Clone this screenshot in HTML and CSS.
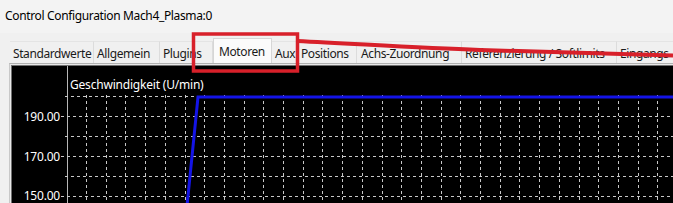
FILE: index.html
```html
<!DOCTYPE html>
<html>
<head>
<meta charset="utf-8">
<link rel="stylesheet" href="styles.css">
</head>
<body>
<div class="window">
  <div class="titlebar">Control Configuration Mach4_Plasma:0</div>
  <div class="tabs">
    <div class="tab t1">Standardwerte</div>
    <div class="tab t2">Allgemein</div>
    <div class="tab t3">Plugins</div>
    <div class="tab t4 active">Motoren</div>
    <div class="tab t5">Aux</div>
    <div class="tab t6">Positions</div>
    <div class="tab t7">Achs-Zuordnung</div>
    <div class="tab t8">Referenzierung / Softlimits</div>
    <div class="tab t9">Eingangs</div>
  </div>
  <div class="panel">
    <div class="chart">
      <svg class="chart-svg" width="661" height="137" viewBox="0 0 661 137">
        <line x1="55.5" y1="0" x2="55.5" y2="137" stroke="#b8b8b8" stroke-width="1"/>
        <g stroke="#c8c8c8" stroke-width="1" stroke-dasharray="3 3">
          <line x1="53" y1="30.5" x2="661" y2="30.5"/>
          <line x1="49" y1="50.5" x2="661" y2="50.5"/>
          <line x1="53" y1="70.5" x2="661" y2="70.5"/>
          <line x1="49" y1="90.5" x2="661" y2="90.5"/>
          <line x1="53" y1="110.5" x2="661" y2="110.5"/>
          <line x1="49" y1="130.5" x2="661" y2="130.5"/>
        </g>
        <g id="vgrid" stroke="#c8c8c8" stroke-width="1" stroke-dasharray="3 3" stroke-dashoffset="-1"></g>
        <g fill="#ffffff" font-family="'Noto Sans', 'Open Sans', sans-serif" font-size="12" letter-spacing="-0.2">
          <text x="58" y="23">Geschwindigkeit (U/min)</text>
          <text x="48" y="55" text-anchor="end">190.00</text>
          <text x="48" y="95" text-anchor="end">170.00</text>
          <text x="48" y="134" text-anchor="end">150.00</text>
        </g>
        <polyline points="175,140 186,31 661,31" fill="none" stroke="#1414e6" stroke-width="3" stroke-linejoin="miter"/>
      </svg>
    </div>
  </div>
  <svg class="annot" width="673" height="203" viewBox="0 0 673 203">
    <rect x="193.5" y="34" width="104" height="37" fill="none" stroke="#d8202a" stroke-width="3.5"/>
    <path d="M297,41 C360,44 420,48 480,50 S600,53 673,55.5" fill="none" stroke="#d8202a" stroke-width="4"/>
  </svg>
</div>
<script>
  var g = document.getElementById('vgrid');
  var s = '';
  for (var k = 0; k < 31; k++) {
    var x = Math.round(74 + 19.7 * k) + 0.5;
    if (x > 661) break;
    s += '<line x1="' + x + '" y1="28" x2="' + x + '" y2="137"/>';
  }
  g.innerHTML = s;
</script>
</body>
</html>
```

FILE: styles.css
```css
html, body {
  margin: 0;
  padding: 0;
}
body {
  width: 673px;
  height: 203px;
  overflow: hidden;
  background: #f0f0f0;
  font-family: "Noto Sans", "Open Sans", sans-serif;
}
.window {
  position: relative;
  width: 673px;
  height: 203px;
  overflow: hidden;
  display: flex;
  flex-direction: column;
}
.titlebar {
  height: 33px;
  box-sizing: border-box;
  padding: 7px 0 0 5px;
  font-size: 12px;
  letter-spacing: -0.35px;
  color: #000;
  background: #f3f3f3;
  white-space: nowrap;
}
.tabs {
  display: flex;
  align-items: flex-end;
  height: 31px;
  padding-left: 10px;
  box-sizing: border-box;
  white-space: nowrap;
}
.tab {
  flex: none;
  box-sizing: border-box;
  height: 22px;
  padding: 3px 0 0 3px;
  font-size: 12px;
  letter-spacing: -0.4px;
  color: #1a1a1a;
  border-right: 1px solid #dcdcdc;
  border-top: 1px solid #e4e4e4;
  background: #f0f0f0;
  overflow: hidden;
}
.tab.active {
  height: 25px;
  padding-top: 4px;
  padding-left: 5px;
  background: #fbfbfb;
  border: 1px solid #d6d6d6;
  border-bottom: none;
}
.t1 { width: 84px; }
.t2 { width: 66px; }
.t3 { width: 53px; }
.t4 { width: 59px; }
.t5 { width: 26px; }
.t6 { width: 59px; }
.t7 { width: 105px; padding-left: 4px; }
.t8 { width: 155px; }
.t9 { width: 80px; }
.panel {
  flex: 1;
  margin-left: 9px;
  border-top: 1px solid #b0b0b0;
  border-left: 1px solid #c8c8c8;
  padding: 1px 0 0 1px;
  background: #e8e8e8;
}
.chart {
  height: 100%;
  background: #000;
  border-top: 1px solid #707070;
  border-left: 1px solid #707070;
}
.chart-svg {
  display: block;
}
.annot {
  position: absolute;
  left: 0;
  top: 0;
  pointer-events: none;
}
```
